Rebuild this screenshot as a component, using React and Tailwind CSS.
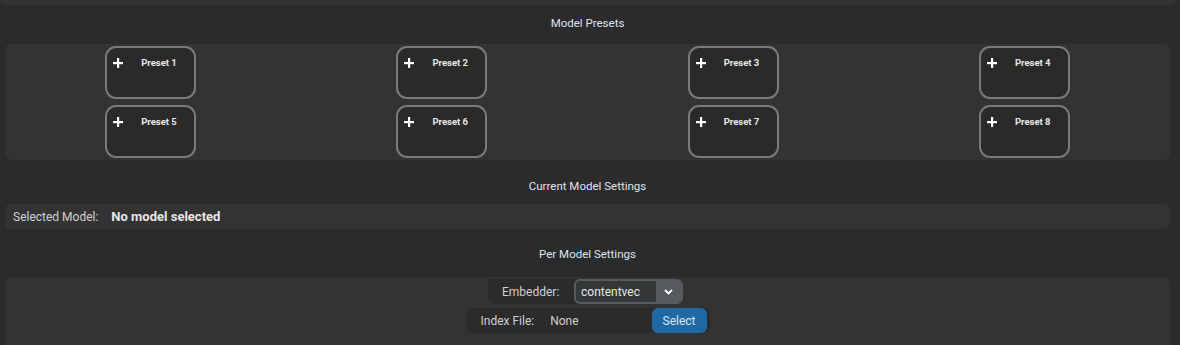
import React from "react";

function Plus() {
  return (
    <svg width="10" height="10" viewBox="0 0 10 10" className="shrink-0">
      <rect x="4" y="0" width="2.2" height="10" fill="#ffffff" />
      <rect x="0" y="4" width="10" height="2.2" fill="#ffffff" />
    </svg>
  );
}

function Preset({ n }) {
  return (
    <div className="flex justify-center">
      <div className="w-[91px] h-[53px] rounded-[11px] border-2 border-[#7a7a7a] bg-[#2a2a2a] flex items-start pt-[10px] pl-[6px]">
        <Plus />
        <span className="ml-[18px] -mt-[2px] text-[9.5px] font-bold text-[#e6e6e6] leading-[14px]">
          Preset {n}
        </span>
      </div>
    </div>
  );
}

export default function App() {
  return (
    <div
      className="w-[1180px] h-[345px] overflow-hidden bg-[#2b2b2b] text-[#dcdcdc] flex flex-col"
      style={{ fontFamily: "Roboto, 'Liberation Sans', sans-serif" }}
    >
      <div className="h-[5px] bg-[#333333] rounded-b-[6px] mr-[4px] shrink-0" />
      <div className="pl-[5px] pr-[10px] flex flex-col">
        <div className="h-[39px] flex items-center justify-center text-[11.5px] text-[#dce4ee] pb-[2px]">
          Model Presets
        </div>
        <div className="h-[116px] bg-[#333333] rounded-[6px] grid grid-cols-4 grid-rows-2 gap-y-[5px] pt-[2px] pb-[2px]">
          {[1, 2, 3, 4, 5, 6, 7, 8].map((n) => (
            <Preset key={n} n={n} />
          ))}
        </div>
        <div className="h-[44px] flex items-center justify-center text-[11.5px] text-[#dce4ee] pt-[10px]">
          Current Model Settings
        </div>
        <div className="h-[25px] bg-[#333333] rounded-[6px] flex items-center pl-[8px]">
          <span className="text-[12px] text-[#d0d0d0]">Selected Model:</span>
          <span className="ml-[13px] text-[13px] font-bold text-[#e6e6e6]">No model selected</span>
        </div>
        <div className="h-[48px] flex items-center justify-center text-[11.5px] text-[#dce4ee] pt-[4px]">
          Per Model Settings
        </div>
        <div className="h-[80px] bg-[#333333] rounded-t-[6px] flex flex-col items-center pt-[2px] gap-[4px]">
          <div className="h-[25px] w-[195px] bg-[#2b2b2b] rounded-[6px] flex items-center mr-[4px]">
            <span className="ml-[14px] text-[12px] text-[#d0d0d0]">Embedder:</span>
            <div className="ml-auto h-[25px] w-[109px] rounded-[6px] border-2 border-[#565b5e] bg-[#343638] flex items-center">
              <span className="ml-[5px] text-[12px] text-[#e6e6e6]">contentvec</span>
              <div className="ml-auto h-full w-[25px] bg-[#565b5e] rounded-r-[4px] flex items-center justify-center">
                <svg width="9" height="6" viewBox="0 0 9 6">
                  <path d="M1 1 L4.5 4.5 L8 1" stroke="#ffffff" strokeWidth="1.8" fill="none" />
                </svg>
              </div>
            </div>
          </div>
          <div className="h-[25px] w-[244px] bg-[#2b2b2b] rounded-[6px] flex items-center">
            <span className="ml-[15px] text-[12px] text-[#d0d0d0]">Index File:</span>
            <span className="ml-[16px] text-[12px] text-[#d0d0d0]">None</span>
            <div className="ml-auto mr-[3px] h-[25px] w-[55px] rounded-[6px] bg-[#1f6aa5] flex items-center justify-center text-[12px] text-[#dce4ee]">
              Select
            </div>
          </div>
        </div>
      </div>
    </div>
  );
}
